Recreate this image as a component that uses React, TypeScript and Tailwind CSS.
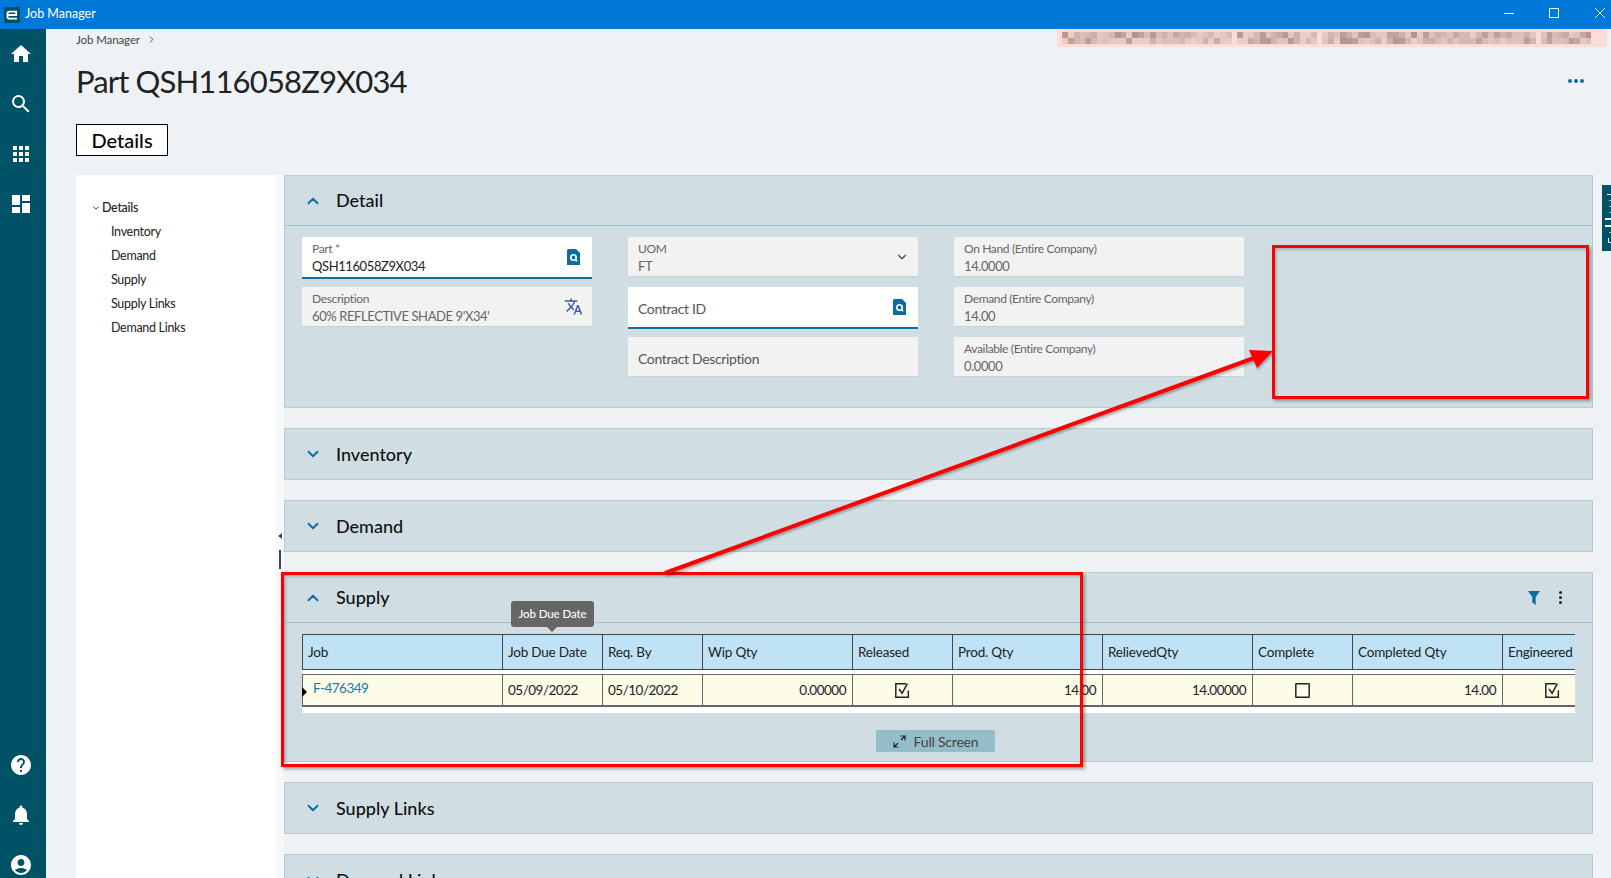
import {
  MdAccountCircle,
  MdApps,
  MdDashboard,
  MdHelp,
  MdHome,
  MdNotifications,
  MdSearch,
  MdTranslate,
} from "react-icons/md";
import { LuChevronDown, LuChevronRight, LuChevronUp } from "react-icons/lu";

const NAV_ITEMS = ["Inventory", "Demand", "Supply", "Supply Links", "Demand Links"];

const COLS = [
  { label: "Job", w: "w-[200px]" },
  { label: "Job Due Date", w: "w-[100px]" },
  { label: "Req. By", w: "w-[100px]" },
  { label: "Wip Qty", w: "w-[150px]" },
  { label: "Released", w: "w-[100px]" },
  { label: "Prod. Qty", w: "w-[150px]" },
  { label: "RelievedQty", w: "w-[150px]" },
  { label: "Complete", w: "w-[100px]" },
  { label: "Completed Qty", w: "w-[150px]" },
  { label: "Engineered", w: "w-[100px]" },
];

// blurred url strip at the top right, generated blocks
const BLUR_GROUPS = [
  { w: 170, n: 29 },
  { w: 80, n: 14 },
  { w: 214, n: 36 },
  { w: 50, n: 9 },
];

function blurColor(seed: number) {
  const s = Math.sin(seed * 12.9898) * 43758.5453;
  const t = Math.pow(s - Math.floor(s), 1.4);
  const r = Math.round(234 - t * 54);
  const g = Math.round(206 - t * 60);
  const b = Math.round(201 - t * 60);
  return `rgb(${r},${g},${b})`;
}

function BlurBanner() {
  return (
    <div className="flex h-[18px] w-[550px] items-center gap-[5px] bg-[#fddcd7] px-[5px]">
      {BLUR_GROUPS.map((g, i) => (
        <div key={i} className="flex h-[12px] shrink-0 flex-col" style={{ width: g.w }}>
          {[0, 1].map((row) => (
            <div key={row} className="flex h-[6px]">
              {Array.from({ length: g.n }).map((_, c) => (
                <div key={c} className="h-full flex-1" style={{ backgroundColor: blurColor(c + row * 50 + i * 100 + 1) }} />
              ))}
            </div>
          ))}
        </div>
      ))}
    </div>
  );
}

function DocSearch() {
  return (
    <svg width="13" height="16" viewBox="0 0 13 16" className="shrink-0">
      <path d="M0 1.5A1.5 1.5 0 0 1 1.5 0H9l4 4v12H0z" fill="#0f6ca0" />
      <circle cx="6.5" cy="8.5" r="2.7" fill="none" stroke="#fff" strokeWidth="1.6" />
      <path d="M8.2 10.4 10 12.2" stroke="#fff" strokeWidth="1.6" />
    </svg>
  );
}

function Field({
  label,
  value,
  white,
  icon,
  big,
}: {
  label: string;
  value?: string;
  white?: boolean;
  icon?: React.ReactNode;
  big?: boolean;
}) {
  return (
    <div
      className={`flex shrink-0 items-center justify-between pl-[10px] pr-[12px] ${
        white ? "-mb-[2px] h-[42px] border-b-2 border-[#0f6ca0] bg-white" : "h-[40px] border-b border-[#c8cfd2] bg-[#f2f2f2]"
      }`}
    >
      {big ? (
        <span className="pt-[3px] text-[14px] tracking-[-0.35px] text-[#555]">{label}</span>
      ) : (
        <div className="flex flex-col pt-[2px]">
          <span className="text-[12px] leading-[16px] tracking-[-0.35px] text-[#666]">{label}</span>
          <span className={`text-[13px] leading-[18px] tracking-[-0.4px] ${white ? "text-[#222]" : "text-[#666]"}`}>{value}</span>
        </div>
      )}
      {icon}
    </div>
  );
}

function Panel({
  title,
  open,
  right,
  children,
}: {
  title: string;
  open?: boolean;
  right?: React.ReactNode;
  children?: React.ReactNode;
}) {
  return (
    <section className="shrink-0 border border-[#bccbd0] bg-[#d0dee3]">
      <div className={`flex h-[50px] items-center pl-[19px] pr-[30px] ${open ? "border-b border-[#9cc0cc]" : ""}`}>
        {open ? (
          <LuChevronUp className="text-[#0f6ca0]" size={18} strokeWidth={2.5} />
        ) : (
          <LuChevronDown className="text-[#0f6ca0]" size={18} strokeWidth={2.5} />
        )}
        <h2 className="ml-[14px] flex-1 text-[18px] font-medium text-[#111]">{title}</h2>
        {right}
      </div>
      {children}
    </section>
  );
}

function CheckIcon({ checked }: { checked?: boolean }) {
  return (
    <svg width="17" height="17" viewBox="0 0 16 16" fill="none" stroke="#222" strokeWidth="1.4">
      {checked ? (
        <>
          <path d="M13.5 8v6.3H1.7V1.7h9.5" />
          <path d="M4.7 6.4 7.6 10.6 12.6 1.6" />
        </>
      ) : (
        <rect x="1.7" y="1.7" width="12.6" height="12.6" rx="0.5" />
      )}
    </svg>
  );
}

function SupplyTable() {
  const numeric = "justify-end pr-[6px]";
  const center = "justify-center";
  const cells = [
    <span key="job" className="relative top-[-2px] pl-[5px] text-[#1a7aa8]">F-476349</span>,
    "05/09/2022",
    "05/10/2022",
    "0.00000",
    <CheckIcon key="rel" checked />,
    "14.00",
    "14.00000",
    <CheckIcon key="com" />,
    "14.00",
    <CheckIcon key="eng" checked />,
  ];
  const cellAlign = ["", "", "", numeric, center, numeric, numeric, center, numeric, center];

  return (
    <div className="ml-[17px] w-[1273px] overflow-hidden bg-white text-[13.5px] text-[#222]">
      <div className="flex h-[36px] border-y border-[#444] bg-[#bfe2f6] tracking-[-0.2px]">
        {COLS.map((c) => (
          <div
            key={c.label}
            className={`flex shrink-0 items-center overflow-hidden whitespace-nowrap border-l border-[#444] pl-[5px] ${c.w}`}
          >
            {c.label}
          </div>
        ))}
      </div>
      <div className="relative mt-[4px] flex h-[33px] border-y border-b-2 border-[#666] bg-[#fdfce9] tracking-[-0.5px]">
        <span className="absolute left-0 top-[12px] h-0 w-0 border-y-[5px] border-l-[5px] border-y-transparent border-l-black" />
        {COLS.map((c, i) => (
          <div
            key={c.label}
            className={`flex shrink-0 items-center overflow-hidden whitespace-nowrap border-l border-[#666] ${c.w} ${
              cellAlign[i] || "pl-[5px]"
            }`}
          >
            {cells[i]}
          </div>
        ))}
      </div>
      <div className="h-[6px]" />
    </div>
  );
}

export default function App() {
  return (
    <div
      className="relative flex h-[878px] w-[1611px] flex-col overflow-hidden bg-[#eef2f5]"
      style={{ fontFamily: '"Lato", "Noto Sans", sans-serif' }}
    >
      {/* window title bar */}
      <header className="flex h-[29px] shrink-0 items-center bg-[#0078d7] text-white">
        <svg width="16" height="16" viewBox="0 0 16 16" fill="none" className="ml-[4px]">
          <rect width="16" height="16" fill="#005366" />
          <path d="M4.2 8H12.2V4.6H5.6Q3.4 4.6 3.4 6.8V9.4Q3.4 11.6 5.6 11.6H13" stroke="#fff" strokeWidth="1.8" />
        </svg>
        <span className="ml-[5px] text-[12.5px]">Job Manager</span>
        <div className="ml-auto flex items-center pb-[3px]">
          <span className="mr-[35px] h-px w-[10px] bg-white" />
          <span className="mr-[36px] h-[10px] w-[10px] border border-white" />
          <svg width="10" height="10" viewBox="0 0 10 10" stroke="#fff" className="mr-[6px]">
            <path d="M0 0 10 10M10 0 0 10" />
          </svg>
        </div>
      </header>

      <div className="flex min-h-0 flex-1">
        {/* app rail */}
        <aside className="flex w-[46px] shrink-0 flex-col items-center justify-between bg-[#005366] pb-[1px] pr-[4px] pt-[13px] text-white">
          <div className="flex flex-col items-center gap-[26px]">
            <MdHome size={24} />
            <MdSearch size={24} />
            <MdApps size={24} />
            <MdDashboard size={24} />
          </div>
          <div className="flex flex-col items-center gap-[26px]">
            <MdHelp size={24} />
            <MdNotifications size={24} />
            <MdAccountCircle size={24} />
          </div>
        </aside>

        <main className="flex min-w-0 flex-1 flex-col">
          <div className="flex h-[18px] shrink-0 items-start justify-between pr-[4px]">
            <div className="ml-[30px] flex items-center pt-[2px] text-[11.5px] tracking-[-0.1px] text-[#444]">
              Job Manager
              <LuChevronRight size={11} className="ml-[6px]" />
            </div>
            <BlurBanner />
          </div>

          <div className="flex h-[68px] shrink-0 items-center justify-between pr-[27px]">
            <h1 className="ml-[30px] text-[31px] font-normal tracking-[-0.85px] text-[#222]">Part QSH116058Z9X034</h1>
            <div className="flex gap-[2px]">
              <span className="h-[4px] w-[4px] rounded-full bg-[#0f6ca0]" />
              <span className="h-[4px] w-[4px] rounded-full bg-[#0f6ca0]" />
              <span className="h-[4px] w-[4px] rounded-full bg-[#0f6ca0]" />
            </div>
          </div>

          <div className="ml-[30px] mt-[9px] flex h-[32px] w-[92px] shrink-0 items-center justify-center border border-black bg-white text-[20px] font-medium text-black">
            Details
          </div>

          <div className="mt-[19px] flex min-h-0 flex-1">
            {/* left tree */}
            <nav className="ml-[30px] w-[200px] shrink-0 bg-white pt-[25px] text-[12.5px] tracking-[-0.3px] text-[#222]">
              <div className="flex h-[16px] items-center pl-[15px] font-medium">
                <LuChevronDown size={10} className="mr-[1px]" />
                Details
              </div>
              <ul className="mt-[8px] flex flex-col gap-[8px] pl-[35px]">
                {NAV_ITEMS.map((n) => (
                  <li key={n} className="h-[16px] leading-[16px]">{n}</li>
                ))}
              </ul>
            </nav>

            {/* splitter */}
            <div className="flex w-[8px] shrink-0 flex-col items-center bg-[#f6f8f9] pt-[358px]">
              <span className="h-0 w-0 border-y-[3px] border-r-[4px] border-y-transparent border-r-[#444]" />
              <span className="mt-[11px] h-[19px] w-[2px] bg-[#444]" />
            </div>

            <div className="flex w-[1309px] shrink-0 flex-col gap-[20px]">
              <Panel title="Detail" open>
                <div className="flex h-[181px] gap-[36px] pl-[17px] pt-[11px]">
                  <div className="flex w-[290px] flex-col gap-[10px]">
                    <Field label="Part *" value="QSH116058Z9X034" white icon={<DocSearch />} />
                    <Field
                      label="Description"
                      value="60% REFLECTIVE SHADE 9'X34'"
                      icon={<MdTranslate size={19} className="-mr-[3px] text-[#3b5ca8]" />}
                    />
                  </div>
                  <div className="flex w-[290px] flex-col gap-[10px]">
                    <Field label="UOM" value="FT" icon={<LuChevronDown size={14} className="-mr-[3px] text-[#444]" />} />
                    <Field label="Contract ID" big white icon={<DocSearch />} />
                    <Field label="Contract Description" big />
                  </div>
                  <div className="flex w-[290px] flex-col gap-[10px]">
                    <Field label="On Hand (Entire Company)" value="14.0000" />
                    <Field label="Demand (Entire Company)" value="14.00" />
                    <Field label="Available (Entire Company)" value="0.0000" />
                  </div>
                </div>
              </Panel>
              <Panel title="Inventory" />
              <Panel title="Demand" />
              <Panel
                title="Supply"
                open
                right={
                  <div className="flex items-center gap-[19px]">
                    <svg width="12" height="14" viewBox="0 0 12 14">
                      <path d="M0 0h12L7.7 6v8L4.3 11.5V6z" fill="#0f6ca0" />
                    </svg>
                    <div className="flex flex-col gap-[2px]">
                      <span className="h-[3px] w-[3px] rounded-full bg-[#222]" />
                      <span className="h-[3px] w-[3px] rounded-full bg-[#222]" />
                      <span className="h-[3px] w-[3px] rounded-full bg-[#222]" />
                    </div>
                  </div>
                }
              >
                <div className="h-[138px] pt-[11px]">
                  <SupplyTable />
                  <div className="ml-[591px] mt-[17px] flex h-[22px] w-[119px] items-center justify-center gap-[8px] rounded-[2px] bg-[#94bdc9] text-[14px] tracking-[-0.2px] text-[#444]">
                    <svg width="13" height="13" viewBox="0 0 13 13" fill="none" stroke="#222" strokeWidth="1.2">
                      <path d="M7.5 1h4.5v4.5M12 1 8 5M5.5 12H1V7.5M1 12l4-4" />
                    </svg>
                    Full Screen
                  </div>
                </div>
              </Panel>
              <Panel title="Supply Links" />
              <Panel title="Demand Links" />
            </div>

            {/* collapsed side tab */}
            <div className="ml-[9px] mt-[10px] flex h-[66px] w-[9px] shrink-0 flex-col items-end justify-center gap-[5px] bg-[#005366]">
              <span className="h-px w-[4px] bg-white" />
              <span className="h-px w-[2px] bg-white/60" />
              <span className="h-px w-[2px] bg-white/60" />
              <span className="h-px w-[2px] bg-white/60" />
              <span className="h-[2px] w-[6px] bg-white" />
              <span className="h-[2px] w-[6px] bg-white" />
              <span className="h-px w-[2px] bg-white/60" />
              <span className="h-[5px] w-[3px] border-b border-l border-white" />
            </div>
          </div>
        </main>
      </div>

      {/* hover tooltip */}
      <div className="absolute left-[511px] top-[601px] flex h-[26px] w-[83px] items-center justify-center rounded-[3px] bg-[#666] text-[11.5px] font-medium tracking-[-0.1px] text-white">
        Job Due Date
        <span className="absolute left-[36px] top-[26px] h-0 w-0 border-x-[5px] border-t-[5px] border-x-transparent border-t-[#666]" />
      </div>

      {/* red annotations */}
      <div className="pointer-events-none absolute left-[1272px] top-[245px] h-[154px] w-[317px] border-[3px] border-[#f00] shadow-[2px_2px_3px_rgba(0,0,0,0.35),inset_2px_2px_3px_rgba(0,0,0,0.2)]" />
      <div className="pointer-events-none absolute left-[281px] top-[572px] h-[195px] w-[802px] border-[3px] border-[#f00] shadow-[2px_2px_3px_rgba(0,0,0,0.35),inset_2px_2px_3px_rgba(0,0,0,0.2)]" />
      <svg
        className="pointer-events-none absolute left-0 top-0 drop-shadow-[1px_2px_1px_rgba(0,0,0,0.3)]"
        width="1611"
        height="878"
        viewBox="0 0 1611 878"
      >
        <path d="M665 573 1254 358" stroke="#f00" strokeWidth="4" />
        <path d="M1273 351 1249 350 1257 368z" fill="#f00" />
      </svg>
    </div>
  );
}
